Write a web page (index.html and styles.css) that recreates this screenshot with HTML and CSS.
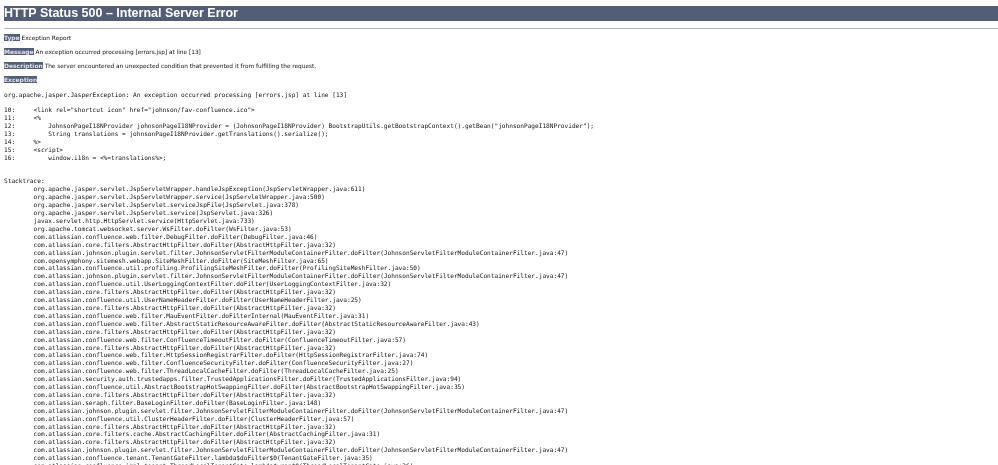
FILE: index.html
```html
<!DOCTYPE html>
<html lang="en">
<head>
<meta charset="utf-8">
<title>HTTP Status 500 – Internal Server Error</title>
<link rel="stylesheet" href="styles.css">
</head>
<body>
<h1 class="title">HTTP Status 500 – Internal Server Error</h1>
<hr class="rule">
<p class="info"><b class="label">Type</b> Exception Report</p>
<p class="info"><b class="label">Message</b> An exception occurred processing [errors.jsp] at line [13]</p>
<p class="info"><b class="label">Description</b> The server encountered an unexpected condition that prevented it from fulfilling the request.</p>
<p class="info"><b class="label">Exception</b></p>
<pre class="trace">org.apache.jasper.JasperException: An exception occurred processing [errors.jsp] at line [13]

10:	&lt;link rel="shortcut icon" href="johnson/fav-confluence.ico"&gt;
11:	&lt;%
12:	    JohnsonPageI18NProvider johnsonPageI18NProvider = (JohnsonPageI18NProvider) BootstrapUtils.getBootstrapContext().getBean("johnsonPageI18NProvider");
13:	    String translations = johnsonPageI18NProvider.getTranslations().serialize();
14:	%&gt;
15:	&lt;script&gt;
16:	    window.i18n = &lt;%=translations%&gt;;


Stacktrace:
	org.apache.jasper.servlet.JspServletWrapper.handleJspException(JspServletWrapper.java:611)
	org.apache.jasper.servlet.JspServletWrapper.service(JspServletWrapper.java:500)
	org.apache.jasper.servlet.JspServlet.serviceJspFile(JspServlet.java:378)
	org.apache.jasper.servlet.JspServlet.service(JspServlet.java:326)
	javax.servlet.http.HttpServlet.service(HttpServlet.java:733)
	org.apache.tomcat.websocket.server.WsFilter.doFilter(WsFilter.java:53)
	com.atlassian.confluence.web.filter.DebugFilter.doFilter(DebugFilter.java:46)
	com.atlassian.core.filters.AbstractHttpFilter.doFilter(AbstractHttpFilter.java:32)
	com.atlassian.johnson.plugin.servlet.filter.JohnsonServletFilterModuleContainerFilter.doFilter(JohnsonServletFilterModuleContainerFilter.java:47)
	com.opensymphony.sitemesh.webapp.SiteMeshFilter.doFilter(SiteMeshFilter.java:65)
	com.atlassian.confluence.util.profiling.ProfilingSiteMeshFilter.doFilter(ProfilingSiteMeshFilter.java:50)
	com.atlassian.johnson.plugin.servlet.filter.JohnsonServletFilterModuleContainerFilter.doFilter(JohnsonServletFilterModuleContainerFilter.java:47)
	com.atlassian.confluence.util.UserLoggingContextFilter.doFilter(UserLoggingContextFilter.java:32)
	com.atlassian.core.filters.AbstractHttpFilter.doFilter(AbstractHttpFilter.java:32)
	com.atlassian.confluence.util.UserNameHeaderFilter.doFilter(UserNameHeaderFilter.java:25)
	com.atlassian.core.filters.AbstractHttpFilter.doFilter(AbstractHttpFilter.java:32)
	com.atlassian.confluence.web.filter.MauEventFilter.doFilterInternal(MauEventFilter.java:31)
	com.atlassian.confluence.web.filter.AbstractStaticResourceAwareFilter.doFilter(AbstractStaticResourceAwareFilter.java:43)
	com.atlassian.core.filters.AbstractHttpFilter.doFilter(AbstractHttpFilter.java:32)
	com.atlassian.confluence.web.filter.ConfluenceTimeoutFilter.doFilter(ConfluenceTimeoutFilter.java:57)
	com.atlassian.core.filters.AbstractHttpFilter.doFilter(AbstractHttpFilter.java:32)
	com.atlassian.confluence.web.filter.HttpSessionRegistrarFilter.doFilter(HttpSessionRegistrarFilter.java:74)
	com.atlassian.confluence.web.filter.ConfluenceSecurityFilter.doFilter(ConfluenceSecurityFilter.java:27)
	com.atlassian.confluence.web.filter.ThreadLocalCacheFilter.doFilter(ThreadLocalCacheFilter.java:25)
	com.atlassian.security.auth.trustedapps.filter.TrustedApplicationsFilter.doFilter(TrustedApplicationsFilter.java:94)
	com.atlassian.confluence.util.AbstractBootstrapHotSwappingFilter.doFilter(AbstractBootstrapHotSwappingFilter.java:35)
	com.atlassian.core.filters.AbstractHttpFilter.doFilter(AbstractHttpFilter.java:32)
	com.atlassian.seraph.filter.BaseLoginFilter.doFilter(BaseLoginFilter.java:148)
	com.atlassian.johnson.plugin.servlet.filter.JohnsonServletFilterModuleContainerFilter.doFilter(JohnsonServletFilterModuleContainerFilter.java:47)
	com.atlassian.confluence.util.ClusterHeaderFilter.doFilter(ClusterHeaderFilter.java:57)
	com.atlassian.core.filters.AbstractHttpFilter.doFilter(AbstractHttpFilter.java:32)
	com.atlassian.core.filters.cache.AbstractCachingFilter.doFilter(AbstractCachingFilter.java:31)
	com.atlassian.core.filters.AbstractHttpFilter.doFilter(AbstractHttpFilter.java:32)
	com.atlassian.johnson.plugin.servlet.filter.JohnsonServletFilterModuleContainerFilter.doFilter(JohnsonServletFilterModuleContainerFilter.java:47)
	com.atlassian.confluence.tenant.TenantGateFilter.lambda$doFilter$0(TenantGateFilter.java:35)
	com.atlassian.confluence.impl.tenant.ThreadLocalTenantGate.lambda$wrap$0(ThreadLocalTenantGate.java:26)</pre>
</body>
</html>
```
FILE: styles.css
```css
html, body {
  margin: 0;
  padding: 0;
  height: 465px;
  overflow: hidden;
  background: #fff;
}
body {
  padding-left: 4px;
  font-family: "DejaVu Sans", sans-serif;
  font-size: 5.8px;
  color: #111;
  filter: blur(0.3px);
}
.title {
  margin: 6px 0 0;
  height: 15px;
  line-height: 15px;
  font-family: "Liberation Sans", sans-serif;
  font-size: 12.5px;
  font-weight: 700;
  color: #fff;
  background: #525d76;
}
.rule {
  height: 1px;
  margin: 7px 0 0;
  border: 0;
  background: #b4b7c6;
}
.info {
  margin: 0;
  padding-top: 5px;
  height: 14px;
  line-height: 8px;
  box-sizing: border-box;
}
.label {
  font-size: 6px;
  color: #dfe2ea;
  background: #525d76;
}
.trace {
  margin: 5.5px 0 0;
  font-family: "DejaVu Sans Mono", monospace;
  font-size: 6.13px;
  line-height: 7.9px;
  tab-size: 8;
  color: #111;
}
```
